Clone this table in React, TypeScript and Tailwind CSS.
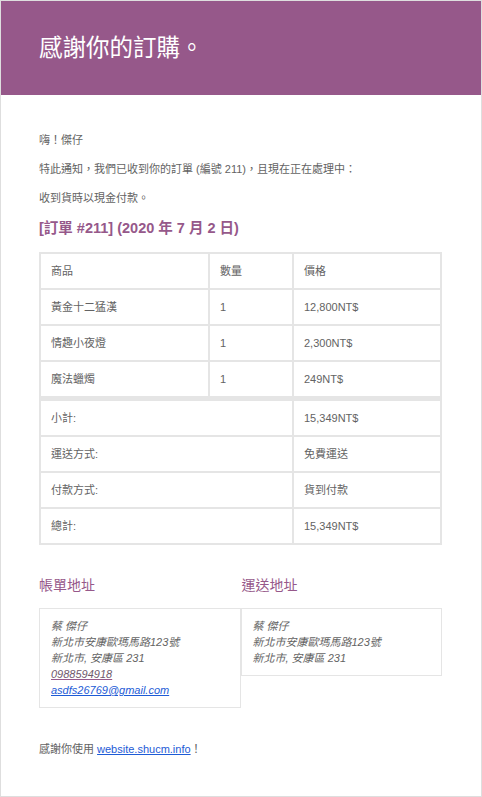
import React from "react";

const font = "font-['Liberation_Sans','Noto_Sans_CJK_TC',sans-serif]";

const items = [
  { name: "黃金十二猛漢", qty: "1", price: "12,800NT$" },
  { name: "情趣小夜燈", qty: "1", price: "2,300NT$" },
  { name: "魔法蠟燭", qty: "1", price: "249NT$" },
];

const totals = [
  { label: "小計:", value: "15,349NT$" },
  { label: "運送方式:", value: "免費運送" },
  { label: "付款方式:", value: "貨到付款" },
  { label: "總計:", value: "15,349NT$" },
];

const cell =
  "border border-[#e5e5e5] px-[10px] py-[10px] leading-[14px] text-left align-middle font-normal";

export default function App() {
  return (
    <div className={`${font} w-[482px] h-[797px] bg-white text-[#636363] text-[11px]`}>
      <div className="border border-[#dedede] h-full flex flex-col">
        <div className="h-[94px] bg-[#96588a] flex items-center pl-[38px]">
          <h1 className="text-white text-[23.5px] leading-[28px] font-normal">感謝你的訂購。</h1>
        </div>
        <div className="pl-[38px] pr-[39px] pt-[38px] flex flex-col">
          <p className="leading-[15px] mb-[14px]">嗨！傑仔</p>
          <p className="leading-[15px] mb-[14px]">
            特此通知，我們已收到你的訂單 (編號 211)，且現在正在處理中：
          </p>
          <p className="leading-[15px]">收到貨時以現金付款。</p>
          <h2 className="mt-[13px] mb-[15px] text-[14.5px] leading-[18px] font-bold text-[#96588a]">
            [訂單 #211] (2020 年 7 月 2 日)
          </h2>
          <table className="w-full table-fixed border-separate border-spacing-0 border border-[#e5e5e5]">
            <colgroup>
              <col className="w-[169px]" />
              <col className="w-[84px]" />
              <col />
            </colgroup>
            <thead>
              <tr>
                <th className={cell}>商品</th>
                <th className={cell}>數量</th>
                <th className={cell}>價格</th>
              </tr>
            </thead>
            <tbody>
              {items.map((it) => (
                <tr key={it.name}>
                  <td className={cell}>{it.name}</td>
                  <td className={cell}>{it.qty}</td>
                  <td className={cell}>{it.price}</td>
                </tr>
              ))}
            </tbody>
            <tfoot>
              {totals.map((t, i) => (
                <tr key={t.label}>
                  <th colSpan={2} className={`${cell} ${i === 0 ? "border-t-4" : ""}`}>
                    {t.label}
                  </th>
                  <td className={`${cell} ${i === 0 ? "border-t-4" : ""}`}>{t.value}</td>
                </tr>
              ))}
            </tfoot>
          </table>

          <div className="grid grid-cols-2 mt-[31px] items-start">
            <div className="flex flex-col">
              <h2 className="text-[14px] leading-[18px] font-normal text-[#96588a] mb-[14px]">帳單地址</h2>
              <address className="border border-[#e5e5e5] pt-[9px] pb-[9px] px-[11px] italic leading-[16px]">
                <div>蔡 傑仔</div>
                <div>新北市安康歐瑪馬路123號</div>
                <div>新北市, 安康區 231</div>
                <div>
                  <a className="underline decoration-[#96588a] text-[#6f5a6c]" href="#">0988594918</a>
                </div>
                <div>
                  <a className="underline text-[#1d5bd6]" href="#">asdfs26769@gmail.com</a>
                </div>
              </address>
            </div>
            <div className="flex flex-col">
              <h2 className="text-[14px] leading-[18px] font-normal text-[#96588a] mb-[14px] pl-[1px]">運送地址</h2>
              <address className="border border-[#e5e5e5] pt-[9px] pb-[9px] px-[11px] italic leading-[16px]">
                <div>蔡 傑仔</div>
                <div>新北市安康歐瑪馬路123號</div>
                <div>新北市, 安康區 231</div>
              </address>
            </div>
          </div>

          <p className="mt-[34px] leading-[15px]">
            感謝你使用{" "}
            <a className="underline text-[#1d5bd6]" href="#">website.shucm.info</a>！
          </p>
        </div>
      </div>
    </div>
  );
}
